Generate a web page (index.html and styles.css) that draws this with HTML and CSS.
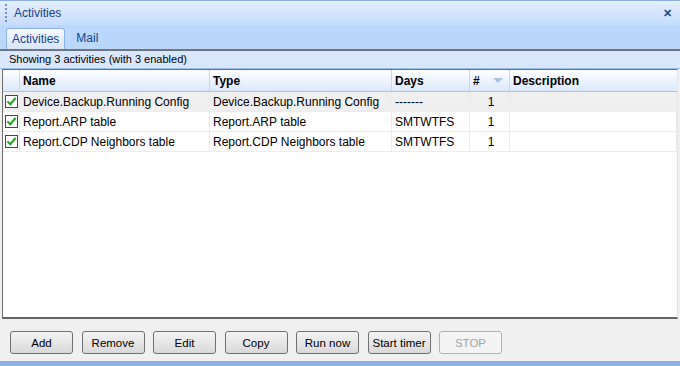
FILE: index.html
```html
<!DOCTYPE html>
<html lang="en">
<head>
    <meta charset="UTF-8">
    <title>Activities</title>
    <link rel="stylesheet" href="styles.css">
</head>
<body>
    <div class="panel">
        <div class="titlebar">
            <span class="grip"></span>
            <span class="title">Activities</span>
            <span class="close">&#x2715;</span>
        </div>
        <div class="tabs">
            <div class="tab active">Activities</div>
            <div class="tab">Mail</div>
        </div>
        <div class="page">
            <div class="status">Showing 3 activities (with 3 enabled)</div>
            <div class="list">
                <div class="row head">
                    <div class="cell"></div>
                    <div class="cell">Name</div>
                    <div class="cell">Type</div>
                    <div class="cell">Days</div>
                    <div class="cell sort"># <span class="arrow"></span></div>
                    <div class="cell">Description</div>
                </div>
                <div class="row selected">
                    <div class="cell"><span class="check"></span></div>
                    <div class="cell">Device.Backup.Running Config</div>
                    <div class="cell">Device.Backup.Running Config</div>
                    <div class="cell">-------</div>
                    <div class="cell num">1</div>
                    <div class="cell"></div>
                </div>
                <div class="row">
                    <div class="cell"><span class="check"></span></div>
                    <div class="cell">Report.ARP table</div>
                    <div class="cell">Report.ARP table</div>
                    <div class="cell">SMTWTFS</div>
                    <div class="cell num">1</div>
                    <div class="cell"></div>
                </div>
                <div class="row">
                    <div class="cell"><span class="check"></span></div>
                    <div class="cell">Report.CDP Neighbors table</div>
                    <div class="cell">Report.CDP Neighbors table</div>
                    <div class="cell">SMTWTFS</div>
                    <div class="cell num">1</div>
                    <div class="cell"></div>
                </div>
            </div>
            <div class="buttons">
                <button>Add</button>
                <button>Remove</button>
                <button>Edit</button>
                <button>Copy</button>
                <button>Run now</button>
                <button>Start timer</button>
                <button disabled>STOP</button>
            </div>
        </div>
        <div class="footer"></div>
    </div>
</body>
</html>
```

FILE: styles.css
```css
* {
    box-sizing: border-box;
    margin: 0;
    padding: 0;
}
body {
    background: #f0f0f0;
    font-family: "Liberation Sans", Arial, sans-serif;
    font-size: 12px;
    color: #000;
}
.panel {
    width: 680px;
    height: 366px;
    display: flex;
    flex-direction: column;
    background: #bfdbff;
}
.titlebar {
    height: 25px;
    border-top: 1px solid #8aaee0;
    background: linear-gradient(#e4effd, #c6dcfb);
    display: flex;
    align-items: center;
    padding: 0 8px 0 5px;
    color: #15428b;
}
.grip {
    width: 2px;
    height: 18px;
    margin-right: 7px;
    background: repeating-linear-gradient(#6f8fc0 0 2px, transparent 2px 4px);
}
.title {
    flex: 1;
    font-size: 12px;
}
.close {
    font-size: 11px;
    color: #15428b;
    -webkit-text-stroke: 0.4px #15428b;
}
.tabs {
    height: 26px;
    display: flex;
    align-items: flex-end;
    padding-left: 6px;
    background: #bcd7fc;
    border-bottom: 2px solid #6d7583;
}
.tab {
    height: 21px;
    padding: 3px 5px 0;
    margin-right: 6px;
    color: #15428b;
    font-size: 12px;
}
.tab.active {
    background: linear-gradient(#f5f9ff, #d6e6fd);
    border: 1px solid #8db2e3;
    border-bottom: none;
    border-radius: 3px 3px 0 0;
}
.page {
    flex: 1;
    display: flex;
    flex-direction: column;
    background: #f0f0f0;
}
.status {
    height: 18px;
    padding: 2px 0 0 9px;
    background: #d8e7fc;
    border-bottom: 1px solid #9ebfe9;
    font-size: 11px;
}
.list {
    flex: 1;
    margin: 0 2px 0 2px;
    background: #fff;
    border-left: 1px solid #6f6f6f;
    border-top: 1px solid #6f6f6f;
    border-bottom: 2px solid #646464;
    border-right: 1px solid #e3e3e3;
}
.row {
    display: grid;
    grid-template-columns: 17px 190px 182px 78px 40px 1fr;
    height: 20px;
    border-bottom: 1px solid #ececec;
}
.row.head {
    height: 22px;
    background: linear-gradient(#ffffff, #dbe8fc);
    border-bottom: 1px solid #a7c4ec;
    font-weight: bold;
}
.row.selected {
    background: #efefef;
}
.cell {
    display: flex;
    align-items: center;
    padding-left: 3px;
    white-space: nowrap;
    overflow: hidden;
}
.head .cell {
    border-right: 1px solid #c5d6ee;
}
.head .cell:last-child {
    border-right: none;
}
.row:not(.head) .cell {
    border-right: 1px solid #ececec;
}
.num {
    justify-content: center;
}
.sort {
    justify-content: space-between;
    padding-right: 6px;
}
.arrow {
    width: 0;
    height: 0;
    border-left: 5px solid transparent;
    border-right: 5px solid transparent;
    border-top: 5px solid #a7c5ec;
}
.check {
    width: 13px;
    height: 13px;
    border: 1px solid #1c5180;
    background: #fff;
    position: relative;
    margin-left: -1px;
}
.check::after {
    content: "";
    position: absolute;
    left: 3px;
    top: 0px;
    width: 3px;
    height: 7px;
    border-right: 2px solid #21a121;
    border-bottom: 2px solid #21a121;
    transform: rotate(40deg);
}
.buttons {
    height: 42px;
    display: flex;
    align-items: flex-start;
    gap: 8.5px;
    padding: 12px 0 0 10px;
}
button {
    width: 63px;
    height: 23px;
    font-family: "Liberation Sans", Arial, sans-serif;
    font-size: 11.5px;
    color: #000;
    border: 1px solid #707070;
    border-radius: 3px;
    background: linear-gradient(#f3f3f3, #e6e6e6 50%, #d9d9d9);
}
button:disabled {
    border-color: #b0b0b0;
    background: #f4f4f4;
    color: #a3a3a3;
}
.footer {
    height: 5px;
    background: #8db2e3;
}
```
